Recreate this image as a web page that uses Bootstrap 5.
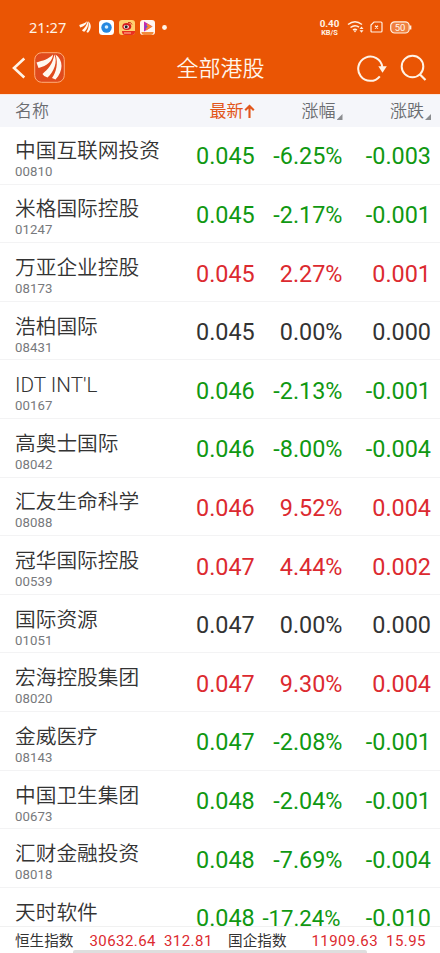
<!DOCTYPE html>
<html lang="zh-CN">
<head>
<meta charset="utf-8">
<meta name="viewport" content="width=device-width, initial-scale=1">
<title>全部港股</title>
<link rel="stylesheet" href="https://cdn.jsdelivr.net/npm/bootstrap@5.3.0/dist/css/bootstrap.min.css">
<style>
body{font-family:Roboto,"Noto Sans CJK SC",sans-serif;color:#333;background:#fff;height:953px;width:440px;line-height:1}
svg{display:block;flex:none}
.top-area{background:#ea5504;height:94px;color:#fff3e6}
.status-row{height:54px;padding:0 28px 0 29px}
.clock{font:14.6px/18px "Noto Sans",sans-serif;width:50px}
.rate{font:700 9.800px/10px Roboto,sans-serif;width:21px;padding-top:1px}
.rate small{font-size:7.400px;line-height:8px;display:block}
.gap-5px{margin-left:5px}.gap-7px{margin-left:7px}
.title-row{height:40px;padding:0 13px 13px 12px}
.page-title{font-size:22px;font-weight:350;line-height:28px;color:#fff6ec;padding-left:19px;padding-top:3px}
.quote-grid{display:grid;grid-template-columns:181px 58.5px 88px 88.5px;padding-left:15px;padding-right:9px;align-items:center}
.col-heads{height:33px;background:#f5f6fa;color:#6b6d71;font-size:17px;font-weight:350;line-height:24px;border-top:1px solid #fbe6dc}
.col-heads .latest{color:#e2561b;font-weight:400}
.tri{width:6px;height:6px;background:#8b8d90;clip-path:polygon(100% 0,100% 100%,0 100%);margin:0 0 3px 1px}
.quotes{height:800px;margin-top:-1px}
.quote{height:58.62px;flex:none;border-bottom:1px solid #f3f3f4}
.stock{font-size:20.7px;font-weight:350;line-height:24px;padding-top:8px}
.code{font-size:13.2px;line-height:14px;color:#77797c;margin-top:2px;letter-spacing:.1px}
.quote:last-child{align-items:start;height:41px;border:0}
.quote:last-child .stock{padding-top:13px}
.quote:last-child .num{padding-top:18px;line-height:24px}
.num{font-size:23.4px;line-height:28px;text-align:right;white-space:nowrap;padding-top:3px}
.quote .num-tight{font-size:22.2px;padding-right:2px}
.up{color:#dc2a30}.down{color:#109812}.flat{color:#333}
.index-bar{height:27px;background:#fff;border-top:1px solid #f1f1f1;padding:2px 14px 0 15px;font-size:14.6px;line-height:25px}
.index-bar .up{font-size:15px;letter-spacing:.45px}
.index-bar .wide-gap{margin-right:25px}
.home-line{width:294px;height:3px;left:73px;bottom:0;background:#dedede;border-radius:2px 2px 0 0}
</style>
<script src="https://cdn.jsdelivr.net/npm/bootstrap@5.3.0/dist/js/bootstrap.bundle.min.js"></script>
</head>
<body class="position-relative overflow-hidden d-flex flex-column">
<svg width="0" height="0" class="position-absolute" aria-hidden="true"><defs>
<symbol id="wing" viewBox="0 0 31 31"><path d="M2.5 10.5C9 8.5 14 7.5 19 2.5C19 8.500 13 14 4.500 16ZM8.500 22C14 17 19 12 20.300 2.500C24 9 20 20 13.500 25.500Q10 25 8.500 22ZM18 26C22 20 24.500 12 21.500 2.500C29.500 8 29.500 19 21.500 27.500Z" fill="#fff8f0"/></symbol>
</defs></svg>
<header class="top-area flex-shrink-0">
  <div class="status-row d-flex align-items-center justify-content-between">
    <div class="d-flex align-items-center">
      <span class="clock">21:27</span>
      <svg width="12" height="12" viewBox="2 2 26 26"><use href="#wing" width="31" height="31"/></svg>
      <svg class="ms-2" width="15" height="15" viewBox="0 0 15 15"><rect width="15" height="15" rx="3.5" fill="#fff"/><circle cx="7.500" cy="7.500" r="5.200" fill="#2588e0"/><circle cx="7.500" cy="7" r="1.800" fill="#d5efff"/></svg>
      <svg class="gap-5px" width="16" height="15" viewBox="0 0 16 15"><rect width="16" height="15" rx="3" fill="#ffcf70"/><ellipse cx="7.800" cy="6.500" rx="4.500" ry="3.400" fill="#d61e20"/><path d="M9 2.500Q12 1.500 13 4.500" stroke="#d5361f" fill="none"/><ellipse cx="7.300" cy="6.800" rx="2.700" ry="1.900" fill="#fff"/><circle cx="7.200" cy="6.800" r="1.500" fill="#222"/><path d="M3 11H16V12Q16 15 13 15H6Q3 15 3 11" fill="#e93020"/><path d="M5 13H12" stroke="#ffc0a0"/></svg>
      <svg class="gap-5px" width="15" height="15" viewBox="0 0 15 15"><rect width="15" height="15" rx="3" fill="#fff5f1"/><path d="M4 1.500L12.500 6.500L4 11.500Z" fill="#c529ae"/><path d="M7 3.500L12.500 6.500L6 10.500Z" fill="#f48a32"/><path d="M5 5L8 6.800L5 8.500Z" fill="#6654ce"/><path d="M1.500 12H13.500V13Q13 15 11 15H4Q2 15 1.500 13Z" fill="#f38b3b"/></svg>
      <svg class="gap-7px" width="5" height="5"><circle cx="2.500" cy="2.500" r="2.400" fill="#fff4e9"/></svg>
    </div>
    <div class="d-flex align-items-center">
      <div class="rate text-center">0.40<small>KB/S</small></div>
      <svg class="gap-7px" width="18" height="14" viewBox="0 0 18 14" fill="none" stroke="#fff1e3" stroke-width="1.500"><path d="M1 4.500Q8 -1 15 4.500M3.500 7.500Q8 4 12 7.200M6 10Q8 8.500 10 10"/><path d="M6.500 10.500H9.500L8 12.500Z" fill="#fff1e3" stroke="none"/><path d="M12.500 9L14.500 6.500L16.500 9ZM12.500 10.300L14.500 12.800L16.500 10.300Z" fill="#fff1e3" stroke="none"/></svg>
      <svg class="gap-5px" width="13" height="12" viewBox="0 0 13 12" fill="none" stroke="#fff1e3" stroke-width="1.200"><path d="M4 1H11Q12 1 12 2V10Q12 11 11 11H2Q1 11 1 10V4Z"/><path d="M5 4.700L8 7.500M8 4.700L5 7.500"/></svg>
      <svg class="gap-7px" width="22" height="13" viewBox="0 0 22 13"><rect x=".7" y=".8" width="18.500" height="11.200" rx="4" fill="#f0803f" stroke="#fff1e3" stroke-width="1.200"/><path d="M20.600 4.500V8.500" stroke="#fff1e3" stroke-width="1.500"/><text x="10" y="9.900" text-anchor="middle" font-family="Roboto" font-size="9.500" fill="#fff8ef">50</text></svg>
    </div>
  </div>
  <div class="title-row d-flex align-items-center justify-content-between">
    <div class="d-flex align-items-center">
      <svg width="14" height="22" viewBox="0 0 14 22"><path d="M12.300 1.500L2 11L12.300 20.500" fill="none" stroke="#fff3e6" stroke-width="2.600"/></svg>
      <svg class="ms-2" width="31" height="31" viewBox="0 0 31 31"><rect x=".7" y=".7" width="29.600" height="29.600" rx="7" fill="#e04a1c" stroke="#ffad79"/><use href="#wing" width="31" height="31"/></svg>
    </div>
    <div class="page-title">全部港股</div>
    <div class="d-flex align-items-center">
      <svg width="30" height="28" viewBox="0 0 30 28"><path d="M22.800 22.300A12.100 12.100 0 1 1 25.300 13" fill="none" stroke="#fff3e6" stroke-width="2"/><path d="M21.300 12.300H29.800L25.500 18.800Z" fill="#fff3e6"/></svg>
      <svg width="40" height="28" viewBox="-13 0 40 28"><circle cx="12.500" cy="12.500" r="10.800" fill="none" stroke="#fff3e6" stroke-width="2"/><path d="M19.500 20L25.500 26" stroke="#fff3e6" stroke-width="2.200"/></svg>
    </div>
  </div>
</header>
<div class="quote-grid col-heads flex-shrink-0">
  <span>名称</span>
  <span class="latest d-flex align-items-center justify-content-end text-nowrap">最新<svg width="11" height="15" viewBox="0 0 11 15"><path d="M5.500 14V2M1.200 6.300L5.500 2L9.800 6.300" fill="none" stroke="#e2561b" stroke-width="2.100"/></svg></span>
  <span class="d-flex align-items-end justify-content-end">涨幅<i class="tri"></i></span>
  <span class="d-flex align-items-end justify-content-end">涨跌<i class="tri"></i></span>
</div>
<main class="quotes d-flex flex-column flex-shrink-0" id="quotes"></main>
<footer class="index-bar d-flex justify-content-between flex-shrink-0">
  <div class="d-flex"><span class="me-3">恒生指数</span><span class="up me-2">30632.64</span><span class="up">312.81</span></div>
  <div class="d-flex"><span class="wide-gap">国企指数</span><span class="up me-2">11909.63</span><span class="up">15.95</span></div>
</footer>
<div class="home-line position-absolute"></div>
<script>
const stocks = [
  ["中国互联网投资","00810","0.045","-6.25%","-0.003"],
  ["米格国际控股","01247","0.045","-2.17%","-0.001"],
  ["万亚企业控股","08173","0.045","2.27%","0.001"],
  ["浩柏国际","08431","0.045","0.00%","0.000"],
  ["IDT INT'L","00167","0.046","-2.13%","-0.001"],
  ["高奥士国际","08042","0.046","-8.00%","-0.004"],
  ["汇友生命科学","08088","0.046","9.52%","0.004"],
  ["冠华国际控股","00539","0.047","4.44%","0.002"],
  ["国际资源","01051","0.047","0.00%","0.000"],
  ["宏海控股集团","08020","0.047","9.30%","0.004"],
  ["金威医疗","08143","0.047","-2.08%","-0.001"],
  ["中国卫生集团","00673","0.048","-2.04%","-0.001"],
  ["汇财金融投资","08018","0.048","-7.69%","-0.004"],
  ["天时软件","","0.048","-17.24%","-0.010"]
];
document.getElementById("quotes").innerHTML = stocks.map(([name, code, price, pct, diff]) => {
  const v = parseFloat(pct), tone = v > 0 ? "up" : v < 0 ? "down" : "flat";
  return `<div class="quote quote-grid">
    <div><div class="stock">${name}</div>${code ? `<div class="code">${code}</div>` : ""}</div>
    <div class="num ${tone}">${price}</div>
    <div class="num ${tone}${pct.length > 6 ? " num-tight" : ""}">${pct}</div>
    <div class="num ${tone}">${diff}</div>
  </div>`;
}).join("");
</script>
</body>
</html>
